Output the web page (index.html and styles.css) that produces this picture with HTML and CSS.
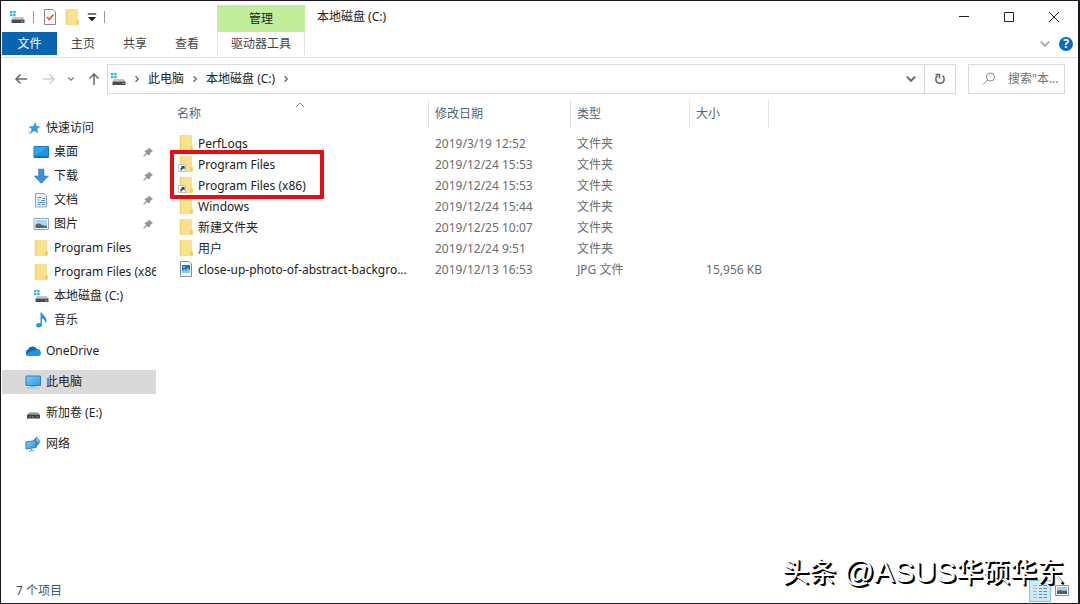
FILE: index.html
```
<!DOCTYPE html>
<html lang="zh-CN">
  <head>
    <meta charset="UTF-8" />
    <meta name="viewport" content="width=device-width, initial-scale=1.0" />
    <title>本地磁盘 (C:)</title>
    <link rel="stylesheet" href="styles.css">
  </head>
  <body>
    <svg class="sprite" aria-hidden="true">
      <defs>
        <linearGradient id="g-blue" x1="0" y1="0" x2="1" y2="1">
          <stop offset="0" stop-color="#7fd0fb" />
          <stop offset="1" stop-color="#2a96e0" />
        </linearGradient>
        <linearGradient id="g-disk" x1="0" y1="0" x2="0" y2="1">
          <stop offset="0" stop-color="#c9c9c9" />
          <stop offset="1" stop-color="#6f6f6f" />
        </linearGradient>
      </defs>
      <symbol id="folder" viewBox="0 0 16 16">
        <path d="M2 .5h11.500v10l1 1v4H2z" fill="#fbe28c" />
        <path d="M2 .5h2v15H2z" fill="#f7d978" />
        <path d="M12 11.500h2.500v4H12z" fill="#f3cc5c" />
        <path d="M2 15.500V.5h11.500V11l1 .5v4z" fill="none" stroke="#efd172" stroke-width=".6" />
      </symbol>
      <symbol id="shortcut" viewBox="0 0 16 16">
        <path d="M.5 8.500h7v7h-7z" fill="#fff" stroke="#a9b2bd" stroke-width=".8" />
        <path d="M2.500 14.500c-.3-2 .4-3 1.600-3.400L3 10h3.600v3.600l-1.200-1.200c-1 .3-1.600 1-1.600 2.100z" fill="#1f4378" />
      </symbol>
      <symbol id="disk-c" viewBox="0 0 16 16">
        <path d="M1 2h2.400v2.200H1zM4.200 2h2.400v2.200H4.200zM1 5h2.400v2.200H1zM4.200 5h2.400v2.200H4.200z" fill="#2cb5df" />
        <path d="M4 8h10l1.500 2.500h-13z" fill="#c3c6c8" />
        <path d="M2.500 10.500h13v3.500h-13z" fill="#4a4d50" />
        <path d="M12.500 12.600h1.600" stroke="#6fe08b" />
      </symbol>
      <symbol id="disk" viewBox="0 0 16 16">
        <path d="M4.500 7h8L15 10H2z" fill="url(#g-disk)" />
        <path d="M2 10h13v3.500H2z" fill="#3f4143" />
        <path d="M4 11.800h2M7 11.800h2M11.500 11.800h2" stroke="#999" stroke-width=".8" />
      </symbol>
      <symbol id="star" viewBox="0 0 16 16">
        <path d="M10.500 2l1.100 4 4.200.4-3.500 2.400.9 4.500-3.800-2.400-4.200 2.900L6.700 9.200 3.500 6.400 7.900 6.300z" fill="#2f9de4" />
        <path d="M3 12h3M4 13.500h2" stroke="#7cc3f0" stroke-width=".8" />
      </symbol>
      <symbol id="desktop" viewBox="0 0 16 16">
        <path d="M1 2.500h14.500v11H1z" fill="#1b92e6" stroke="#1478c8" />
        <path d="M1.500 3H15L1.500 12z" fill="#2fa6f3" />
        <path d="M1 12.800h14" stroke="#0f64ae" />
      </symbol>
      <symbol id="download" viewBox="0 0 16 16">
        <path d="M5.500 1h5.500v7h4.500l-7.200 7.500L1 8h4.500z" fill="#3f8fd3" stroke="#2f7dc2" stroke-width=".5" />
      </symbol>
      <symbol id="document" viewBox="0 0 16 16">
        <path d="M2.500 1.500h8.500l2.500 2.500v11h-11z" fill="#eef5fa" stroke="#8fa3b3" />
        <path d="M4.500 5.500h4M9.500 6.500h2.500M4.500 8h2M8 8.500h4M4.500 10.500h7.500M4.500 12.500h3M9 12.500h3" stroke="#4c92c4" />
      </symbol>
      <symbol id="picture" viewBox="0 0 16 16">
        <path d="M1 2.500h14.500v11H1z" fill="#fff" stroke="#9aa4ad" />
        <path d="M2.500 4H14v8H2.500z" fill="#a9d3ef" />
        <path d="M2.500 8.500c3-2 5-1 6.500.5 2 1 3 .8 5 .5V12H2.500z" fill="#476a86" />
      </symbol>
      <symbol id="music" viewBox="0 0 16 16">
        <path d="M7.500 .5H9c.3 3 4.500 4 4.500 7.500 0 1.500-.6 2.600-1.500 3.500.4-3-1-4.500-3-5V13c0 1.500-1.500 2.500-3.200 2.500S3 14.600 3 13.300 4.500 11 6.100 11c.6 0 1 .1 1.400.3z" fill="#1f9bdc" />
      </symbol>
      <symbol id="cloud" viewBox="0 0 16 16">
        <path d="M3.500 13A3.400 3.400 0 0 1 3 6.500 5 5 0 0 1 12 6a3.600 3.600 0 0 1 1 7z" fill="#1269b8" />
        <path d="M3.500 13c-1.500 0-2.500-.8-3-2l8-3.500 3-.8c2.500 0 4.400 1.300 4.400 3.500 0 1.700-1.200 2.800-2.800 2.800z" fill="#2692df" />
      </symbol>
      <symbol id="computer" viewBox="0 0 16 16">
        <path d="M1 2h14.500v9.500H1z" fill="url(#g-blue)" stroke="#397fae" />
        <path d="M5.500 12.500h5M2 14h12" stroke="#8cb9d3" />
      </symbol>
      <symbol id="network" viewBox="0 0 16 16">
        <path d="M11.500 .5l4 5-4.500 6-5-4z" fill="#3b88bb" />
        <path d="M11.500 .5l4 5-5 1z" fill="#76b9df" />
        <path d="M1 6l10-1.500v7L1 13z" fill="url(#g-blue)" stroke="#337fae" />
        <path d="M4 15.200l5-.8M6.500 13v1.500" stroke="#5b9abf" />
      </symbol>
      <symbol id="jpg" viewBox="0 0 16 16">
        <path d="M2.500 .5h8.500l2.500 2.500v12.500h-11z" fill="#fff" stroke="#87898b" />
        <path d="M4 4h8v8H4z" fill="#1477c5" />
        <path d="M4 10.500L6.500 8 8 9.500 10 7l2 2.500V12H4z" fill="#7fc9f4" />
        <circle cx="6" cy="6" r=".8" fill="#fff" />
      </symbol>
      <symbol id="pin" viewBox="0 0 16 16">
        <path d="M9.500 2l5 5-1.500.5-2.400 2.200c.2 1.300 0 2.300-.9 3.200L7 10.500 2.500 14.500l-.8-.5L5.500 9 2.900 6.500c.9-.9 1.900-1 3.200-.8L8.700 3.500z" fill="#8f959a" />
      </symbol>
      <symbol id="chevron-right" viewBox="0 0 8 8">
        <path d="M2.500 1.200L5.300 4 2.500 6.800" fill="none" stroke="currentColor" stroke-width="1.300" />
      </symbol>
      <symbol id="chevron-down" viewBox="0 0 10 10">
        <path d="M1.500 3L5 6.500 8.500 3" fill="none" stroke="currentColor" stroke-width="1.600" />
      </symbol>
    </svg>

    <div class="window">
      <header class="titlebar">
        <div class="quick">
          <svg class="icon"><use href="#disk-c" /></svg>
          <span class="sep sep-wide"></span>
          <button class="tool" aria-label="属性">
            <svg class="icon" viewBox="0 0 16 16">
              <path d="M2.500 .5h8.500l2.500 2.500v12.500h-11z" fill="#fafafa" stroke="#85898d" />
              <path d="M5 8l2.300 2.500L11.500 5.500" fill="none" stroke="#dd5a35" stroke-width="1.600" />
            </svg>
          </button>
          <button class="tool" aria-label="新建文件夹"><svg class="icon"><use href="#folder" /></svg></button>
          <button class="tool" aria-label="自定义快速访问工具栏">
            <svg class="icon-small" viewBox="0 0 10 10"><path d="M1.500 2.500h7" stroke="#222" /><path d="M1.500 5h7L5 8.500z" fill="#222" /></svg>
          </button>
          <span class="sep"></span>
        </div>
        <div class="context">管理</div>
        <h1 class="title">本地磁盘 (C:)</h1>
        <div class="controls">
          <button aria-label="最小化"><svg viewBox="0 0 12 12"><path d="M1 5.500h10" /></svg></button>
          <button aria-label="最大化"><svg viewBox="0 0 12 12"><path d="M1.500 1.500h9v9h-9z" /></svg></button>
          <button aria-label="关闭"><svg viewBox="0 0 12 12"><path d="M1 1l10 10M11 1L1 11" /></svg></button>
        </div>
      </header>

      <nav class="ribbon">
        <button class="file">文件</button>
        <button>主页</button>
        <button>共享</button>
        <button>查看</button>
        <button class="drive">驱动器工具</button>
        <div class="ribbon-right">
          <button aria-label="展开功能区"><svg class="icon-small"><use href="#chevron-down" /></svg></button>
          <button class="help" aria-label="帮助">?</button>
        </div>
      </nav>

      <div class="navbar">
        <div class="arrows">
          <button aria-label="后退"><svg class="icon" viewBox="0 0 16 16"><path d="M14 8H3M7.500 3.500L3 8l4.500 4.500" /></svg></button>
          <button class="off" aria-label="前进"><svg class="icon" viewBox="0 0 16 16"><path d="M3 8h11M9.500 3.500L14 8l-4.500 4.500" /></svg></button>
          <button aria-label="最近浏览的位置"><svg class="icon-tiny"><use href="#chevron-down" /></svg></button>
          <button aria-label="上移"><svg class="icon" viewBox="0 0 16 16"><path d="M8 14V3M3.500 7.500L8 3l4.500 4.500" /></svg></button>
        </div>
        <div class="address">
          <svg class="icon"><use href="#disk-c" /></svg>
          <svg class="crumb-arrow"><use href="#chevron-right" /></svg>
          <a href="#">此电脑</a>
          <svg class="crumb-arrow"><use href="#chevron-right" /></svg>
          <a href="#">本地磁盘 (C:)</a>
          <svg class="crumb-arrow"><use href="#chevron-right" /></svg>
          <button class="history" aria-label="以前的位置"><svg class="icon-small"><use href="#chevron-down" /></svg></button>
          <button class="refresh" aria-label="刷新">
            <svg class="icon" viewBox="0 0 16 16"><path d="M10.500 4.700a4.200 4.200 0 1 1-5 0M3.500 3.500h4v4" /></svg>
          </button>
        </div>
        <label class="search">
          <svg class="icon" viewBox="0 0 16 16"><circle cx="9.500" cy="6" r="4" /><path d="M6.500 9L2 13.500" /></svg>
          <input type="text" aria-label="搜索" placeholder="搜索&quot;本...">
        </label>
      </div>

      <div class="body">
        <aside class="sidebar">
          <a href="#"><svg class="icon"><use href="#star" /></svg>快速访问</a>
          <a class="sub" href="#"><svg class="icon"><use href="#desktop" /></svg>桌面<svg class="pin"><use href="#pin" /></svg></a>
          <a class="sub" href="#"><svg class="icon"><use href="#download" /></svg>下载<svg class="pin"><use href="#pin" /></svg></a>
          <a class="sub" href="#"><svg class="icon"><use href="#document" /></svg>文档<svg class="pin"><use href="#pin" /></svg></a>
          <a class="sub" href="#"><svg class="icon"><use href="#picture" /></svg>图片<svg class="pin"><use href="#pin" /></svg></a>
          <a class="sub" href="#"><svg class="icon"><use href="#folder" /></svg>Program Files</a>
          <a class="sub" href="#"><svg class="icon"><use href="#folder" /></svg>Program Files (x86)</a>
          <a class="sub" href="#"><svg class="icon"><use href="#disk-c" /></svg>本地磁盘 (C:)</a>
          <a class="sub" href="#"><svg class="icon"><use href="#music" /></svg>音乐</a>
          <a class="group" href="#"><svg class="icon"><use href="#cloud" /></svg>OneDrive</a>
          <a class="group selected" href="#"><svg class="icon"><use href="#computer" /></svg>此电脑</a>
          <a class="group" href="#"><svg class="icon"><use href="#disk" /></svg>新加卷 (E:)</a>
          <a class="group" href="#"><svg class="icon"><use href="#network" /></svg>网络</a>
        </aside>

        <main class="files">
          <table>
            <colgroup>
              <col class="col-name"><col class="col-date"><col class="col-type"><col class="col-size">
            </colgroup>
            <thead>
              <tr>
                <th>名称<svg class="sort" viewBox="0 0 10 10"><path d="M1 7l4-4 4 4" /></svg></th>
                <th>修改日期</th>
                <th>类型</th>
                <th>大小</th>
              </tr>
            </thead>
            <tbody>
              <tr><td><svg class="icon"><use href="#folder" /></svg>PerfLogs</td><td>2019/3/19 12:52</td><td>文件夹</td><td></td></tr>
              <tr><td><svg class="icon"><use href="#folder" /><use href="#shortcut" /></svg>Program Files</td><td>2019/12/24 15:53</td><td>文件夹</td><td></td></tr>
              <tr><td><svg class="icon"><use href="#folder" /><use href="#shortcut" /></svg>Program Files (x86)</td><td>2019/12/24 15:53</td><td>文件夹</td><td></td></tr>
              <tr><td><svg class="icon"><use href="#folder" /></svg>Windows</td><td>2019/12/24 15:44</td><td>文件夹</td><td></td></tr>
              <tr><td><svg class="icon"><use href="#folder" /></svg>新建文件夹</td><td>2019/12/25 10:07</td><td>文件夹</td><td></td></tr>
              <tr><td><svg class="icon"><use href="#folder" /></svg>用户</td><td>2019/12/24 9:51</td><td>文件夹</td><td></td></tr>
              <tr><td><svg class="icon"><use href="#jpg" /></svg>close-up-photo-of-abstract-backgro...</td><td>2019/12/13 16:53</td><td>JPG 文件</td><td>15,956 KB</td></tr>
            </tbody>
          </table>
          <div class="highlight"></div>
        </main>
      </div>

      <footer class="status">
        <span>7 个项目</span>
        <div class="views">
          <button class="active" aria-label="详细信息">
            <svg class="icon" viewBox="0 0 16 16"><path d="M1 2.500h4M1 5.500h4M1 8.500h4M1 11.500h4M1 14.500h4" stroke="#a3bccb" /><path d="M7 2.500h3M11.500 2.500h3.500M7 5.500h3M11.500 5.500h3.500M7 8.500h3M11.500 8.500h3.500M7 11.500h3M11.500 11.500h3.500M7 14.500h3M11.500 14.500h3.500" stroke="#6d8ca0" /></svg>
          </button>
          <button aria-label="大缩略图">
            <svg class="icon" viewBox="0 0 16 16"><path d="M1.500 2.500h13v10h-13z" fill="#fff" stroke="#7d93b4" /><path d="M3 4h10v7H3z" fill="#a7cdec" /><path d="M3 8c3-2 5 1 10-.5V11H3z" fill="#41607c" /></svg>
          </button>
        </div>
      </footer>
      <div class="watermark">头条 <span class="latin">@ASUS</span>华硕华东</div>
    </div>
  </body>
</html>
```
FILE: styles.css
```
* {
  box-sizing: border-box;
}
body {
  margin: 0;
  background: #fff;
  color: #222;
  font-family: "Noto Sans", "Noto Sans CJK SC", sans-serif;
  font-size: 12px;
  line-height: 16px;
}
button {
  border: 0;
  padding: 0;
  background: none;
  color: inherit;
  font: inherit;
}
a {
  color: inherit;
  text-decoration: none;
}
svg {
  flex: none;
}
.sprite {
  position: absolute;
  width: 0;
  height: 0;
}
.icon {
  width: 16px;
  height: 16px;
}
.icon-small {
  width: 12px;
  height: 12px;
}
.icon-tiny {
  width: 8px;
  height: 8px;
}
.window {
  position: relative;
  display: flex;
  flex-direction: column;
  min-height: 100vh;
  border: 1px solid #1b1824;
  border-right-width: 2px;
}

/* title bar */
.titlebar {
  display: flex;
  height: 31px;
}
.quick {
  display: flex;
  align-items: center;
  gap: 6px;
  width: 216px;
  padding-left: 8px;
}
.tool {
  display: flex;
}
.sep {
  width: 1px;
  height: 12px;
  background: #999;
}
.sep-wide {
  margin: 0 2px;
}
.context {
  width: 88px;
  margin-top: 4px;
  padding-top: 6px;
  background: #c0ee9b;
  text-align: center;
}
.title {
  flex: 1;
  margin: 0;
  padding: 8px 12px;
  font-size: 12px;
  font-weight: 400;
}
.controls {
  display: flex;
  padding-right: 2px;
}
.controls button {
  display: flex;
  align-items: center;
  justify-content: center;
  width: 45px;
}
.controls svg {
  width: 12px;
  height: 12px;
  fill: none;
  stroke: #222;
}

/* ribbon tabs */
.ribbon {
  display: flex;
  height: 26px;
  padding: 0 0 2px 1px;
  border-bottom: 1px solid #dedede;
  color: #444;
}
.ribbon > button {
  width: 52px;
  padding-top: 1px;
}
.ribbon .file {
  width: 55px;
  background: #0a65b0;
  color: #fff;
}
.ribbon .drive {
  width: 88px;
  margin-left: 4px;
  border: solid #e2e2e2;
  border-width: 0 1px;
}
.ribbon-right {
  display: flex;
  align-items: center;
  gap: 8px;
  margin-left: auto;
  padding-right: 5px;
  color: #aaa;
}
.ribbon-right button {
  display: flex;
  align-items: center;
  justify-content: center;
}
.ribbon-right .help {
  width: 14px;
  height: 14px;
  border-radius: 50%;
  background: #0b6cbe;
  color: #fff;
  font-weight: 700;
}

/* address row */
.navbar {
  display: flex;
  height: 42px;
  padding: 6px 13px 6px 0;
}
.arrows {
  display: flex;
  align-items: center;
  justify-content: space-between;
  width: 106px;
  padding: 0 5px 0 12px;
  color: #777;
}
.arrows button {
  display: flex;
}
.arrows .icon,
.refresh .icon {
  fill: none;
  stroke: #666;
  stroke-width: 1.5;
}
.arrows .off .icon {
  stroke: #d0d0d0;
}
.address {
  display: flex;
  flex: 1;
  align-items: center;
  gap: 7px;
  padding-left: 2px;
  border: 1px solid #d9d9d9;
}
.crumb-arrow {
  width: 8px;
  height: 8px;
  color: #666;
}
.history {
  display: flex;
  margin-left: auto;
  color: #666;
}
.refresh {
  display: flex;
  align-items: center;
  align-self: stretch;
  justify-content: center;
  width: 31px;
  border-left: 1px solid #d9d9d9;
}
.search {
  display: flex;
  align-items: center;
  width: 97px;
  margin-left: 12px;
  padding-left: 12px;
  border: 1px solid #d9d9d9;
}
.search .icon {
  fill: none;
  stroke: #888;
}
.search input {
  width: 64px;
  min-width: 0;
  padding: 0 0 0 11px;
  border: 0;
  outline: 0;
  font: inherit;
}
.search input::placeholder {
  color: #707070;
}

/* navigation pane */
.body {
  display: flex;
  flex: 1;
}
.sidebar {
  width: 155px;
  padding-top: 16px;
}
.sidebar a {
  display: flex;
  align-items: center;
  gap: 5px;
  height: 24px;
  margin-left: 1px;
  padding-left: 23px;
  overflow: hidden;
  white-space: nowrap;
}
.sidebar .sub {
  padding-left: 31px;
}
.sidebar .group {
  margin-top: 7px;
}
.sidebar .selected {
  background: #d9d9d9;
}
.pin {
  width: 12px;
  height: 12px;
  margin-left: auto;
  margin-right: 2px;
}

/* file list */
.files {
  position: relative;
  flex: 1;
  padding-left: 9px;
}
table {
  width: 604px;
  table-layout: fixed;
  border-collapse: separate;
  border-spacing: 0;
}
.col-name {
  width: 264px;
}
.col-date {
  width: 142px;
}
.col-type {
  width: 119px;
}
.col-size {
  width: 79px;
}
th {
  position: relative;
  height: 28px;
  padding: 0 6px;
  border-right: 1px solid #e4e4e4;
  color: #54647c;
  font-weight: 400;
  text-align: left;
}
th:first-child {
  padding-left: 12px;
}
.sort {
  position: absolute;
  top: 0;
  left: 130px;
  width: 10px;
  height: 10px;
  fill: none;
  stroke: #888;
}
tbody::before {
  content: "";
  display: block;
  height: 5px;
}
td {
  height: 21px;
  padding: 0 7px 0 6px;
  color: #6d6d6d;
  white-space: nowrap;
}
td:first-child {
  padding-left: 13px;
  color: #222;
}
td:last-child {
  text-align: right;
}
td .icon {
  margin-right: 4px;
  vertical-align: -3px;
}
.highlight {
  position: absolute;
  top: 50px;
  left: 14px;
  width: 154px;
  height: 49px;
  border: 4px solid #e30f18;
  border-radius: 1px;
}

/* status bar */
.status {
  display: flex;
  align-items: center;
  justify-content: space-between;
  height: 24px;
  padding: 0 5px 0 15px;
  color: #46546a;
}
.views {
  display: flex;
}
.views button {
  display: flex;
  align-items: center;
  justify-content: center;
  width: 22px;
  height: 22px;
}
.views .active {
  border: 1px solid #7fc3e2;
  background: #cdeafa;
}
.watermark {
  position: absolute;
  right: 14px;
  bottom: 12px;
  color: #fff;
  font-family: "Liberation Sans", "Noto Sans CJK SC", sans-serif;
  font-size: 27px;
  line-height: 36px;
  text-shadow: 1px 1px 0 #000, 2px 2px 0 #000;
}
.latin {
  font-size: 30px;
}
```
